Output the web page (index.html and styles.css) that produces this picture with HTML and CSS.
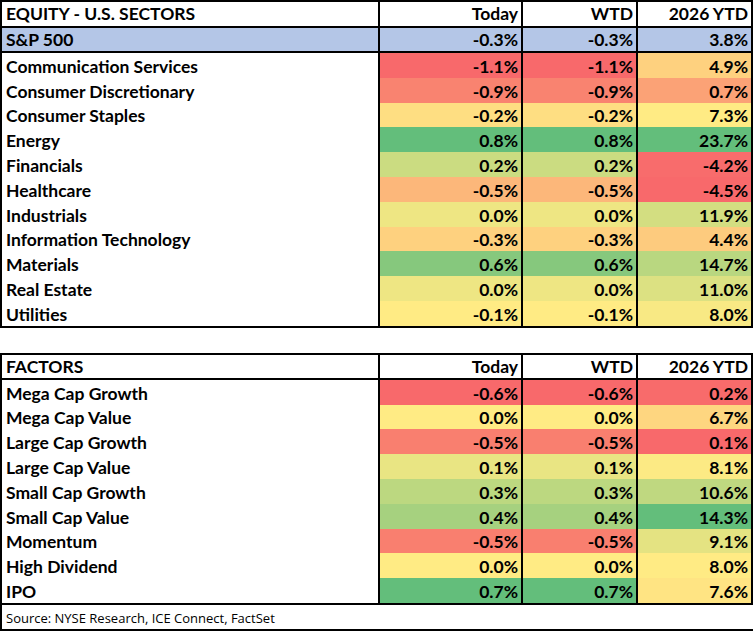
FILE: index.html
```html
<!DOCTYPE html>
<html>
<head>
<meta charset="utf-8">
<link rel="stylesheet" href="styles.css">
</head>
<body>
<div class="page">
  <section class="tbl sectors">
    <div class="row head"><div class="c name">EQUITY - U.S. SECTORS</div><div class="c num">Today</div><div class="c num">WTD</div><div class="c num">2026 YTD</div></div>
    <div class="row index"><div class="c name">S&amp;P 500</div><div class="c num">-0.3%</div><div class="c num">-0.3%</div><div class="c num">3.8%</div></div>
    <div class="body">
      <div class="row"><div class="c name">Communication Services</div><div class="c num" style="background:#F8696B">-1.1%</div><div class="c num" style="background:#F8696B">-1.1%</div><div class="c num" style="background:#FED17F">4.9%</div></div>
      <div class="row"><div class="c name">Consumer Discretionary</div><div class="c num" style="background:#F98370">-0.9%</div><div class="c num" style="background:#F98370">-0.9%</div><div class="c num" style="background:#FBA276">0.7%</div></div>
      <div class="row"><div class="c name">Consumer Staples</div><div class="c num" style="background:#FEDE82">-0.2%</div><div class="c num" style="background:#FEDE82">-0.2%</div><div class="c num" style="background:#FFEB84">7.3%</div></div>
      <div class="row"><div class="c name">Energy</div><div class="c num" style="background:#63BE7B">0.8%</div><div class="c num" style="background:#63BE7B">0.8%</div><div class="c num" style="background:#63BE7B">23.7%</div></div>
      <div class="row"><div class="c name">Financials</div><div class="c num" style="background:#CBDC81">0.2%</div><div class="c num" style="background:#CBDC81">0.2%</div><div class="c num" style="background:#F86C6C">-4.2%</div></div>
      <div class="row"><div class="c name">Healthcare</div><div class="c num" style="background:#FCB77A">-0.5%</div><div class="c num" style="background:#FCB77A">-0.5%</div><div class="c num" style="background:#F8696B">-4.5%</div></div>
      <div class="row"><div class="c name">Industrials</div><div class="c num" style="background:#EEE683">0.0%</div><div class="c num" style="background:#EEE683">0.0%</div><div class="c num" style="background:#D3DE81">11.9%</div></div>
      <div class="row"><div class="c name">Information Technology</div><div class="c num" style="background:#FED17F">-0.3%</div><div class="c num" style="background:#FED17F">-0.3%</div><div class="c num" style="background:#FDCB7E">4.4%</div></div>
      <div class="row"><div class="c name">Materials</div><div class="c num" style="background:#86C87D">0.6%</div><div class="c num" style="background:#86C87D">0.6%</div><div class="c num" style="background:#B9D780">14.7%</div></div>
      <div class="row"><div class="c name">Real Estate</div><div class="c num" style="background:#EEE683">0.0%</div><div class="c num" style="background:#EEE683">0.0%</div><div class="c num" style="background:#DCE182">11.0%</div></div>
      <div class="row"><div class="c name">Utilities</div><div class="c num" style="background:#FFEB84">-0.1%</div><div class="c num" style="background:#FFEB84">-0.1%</div><div class="c num" style="background:#F8E984">8.0%</div></div>
    </div>
  </section>

  <section class="tbl factors">
    <div class="row head"><div class="c name">FACTORS</div><div class="c num">Today</div><div class="c num">WTD</div><div class="c num">2026 YTD</div></div>
    <div class="body">
      <div class="row"><div class="c name">Mega Cap Growth</div><div class="c num" style="background:#F8696B">-0.6%</div><div class="c num" style="background:#F8696B">-0.6%</div><div class="c num" style="background:#F86B6B">0.2%</div></div>
      <div class="row"><div class="c name">Mega Cap Value</div><div class="c num" style="background:#FFEB84">0.0%</div><div class="c num" style="background:#FFEB84">0.0%</div><div class="c num" style="background:#FED680">6.7%</div></div>
      <div class="row"><div class="c name">Large Cap Growth</div><div class="c num" style="background:#F97F6F">-0.5%</div><div class="c num" style="background:#F97F6F">-0.5%</div><div class="c num" style="background:#F8696B">0.1%</div></div>
      <div class="row"><div class="c name">Large Cap Value</div><div class="c num" style="background:#E9E583">0.1%</div><div class="c num" style="background:#E9E583">0.1%</div><div class="c num" style="background:#FCEA84">8.1%</div></div>
      <div class="row"><div class="c name">Small Cap Growth</div><div class="c num" style="background:#BCD880">0.3%</div><div class="c num" style="background:#BCD880">0.3%</div><div class="c num" style="background:#BFD880">10.6%</div></div>
      <div class="row"><div class="c name">Small Cap Value</div><div class="c num" style="background:#A6D17F">0.4%</div><div class="c num" style="background:#A6D17F">0.4%</div><div class="c num" style="background:#63BE7B">14.3%</div></div>
      <div class="row"><div class="c name">Momentum</div><div class="c num" style="background:#F97F6F">-0.5%</div><div class="c num" style="background:#F97F6F">-0.5%</div><div class="c num" style="background:#E4E382">9.1%</div></div>
      <div class="row"><div class="c name">High Dividend</div><div class="c num" style="background:#FFEB84">0.0%</div><div class="c num" style="background:#FFEB84">0.0%</div><div class="c num" style="background:#FFEB84">8.0%</div></div>
      <div class="row"><div class="c name">IPO</div><div class="c num" style="background:#63BE7B">0.7%</div><div class="c num" style="background:#63BE7B">0.7%</div><div class="c num" style="background:#FFE483">7.6%</div></div>
    </div>
  </section>
  <div class="source">Source: NYSE Research, ICE Connect, FactSet</div>
</div>
</body>
</html>
```

FILE: styles.css
```css
html, body {
  margin: 0;
  padding: 0;
  background: #ffffff;
}

.page {
  width: 753px;
  font-family: "Lato", "Liberation Sans", sans-serif;
  color: #000;
}

.tbl {
  border: 2px solid #000;
  display: flex;
  flex-direction: column;
}

.factors {
  margin-top: 25px;
}

.row {
  display: grid;
  grid-template-columns: 376px 143px 115px 115px;
  height: 24.8px;
}

.row.head {
  height: 24px;
  border-bottom: 2px solid #000;
}

.factors .row.head {
  height: 23px;
}

.row.index {
  height: 23px;
  border-bottom: 2px solid #000;
  background: #B4C6E7;
}

.c {
  display: flex;
  align-items: flex-end;
  padding: 0 3px 1px 4px;
  font-weight: 700;
  font-size: 17.5px;
  line-height: 20px;
  white-space: nowrap;
  box-sizing: border-box;
  overflow: hidden;
}

.num {
  justify-content: flex-end;
  border-left: 2px solid #000;
}

.row.head .c {
  padding-bottom: 2px;
}

.row.index .c {
  padding-bottom: 1px;
}

.factors .row.head .c {
  padding-bottom: 1px;
}

.source {
  border-left: 2px solid #000;
  border-bottom: 2px solid #000;
  height: 26px;
  box-sizing: border-box;
  padding: 3px 0 0 4px;
  font-family: "Open Sans", "Liberation Sans", sans-serif;
  font-size: 13px;
  line-height: 20px;
}
```
